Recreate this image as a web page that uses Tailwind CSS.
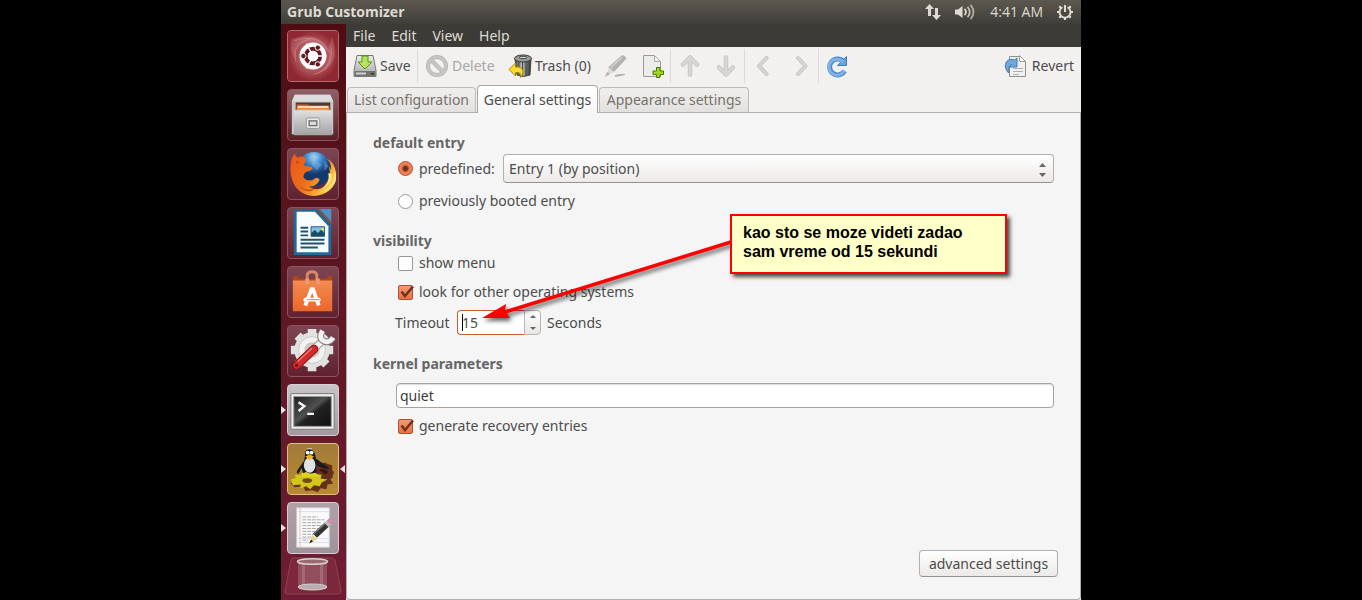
<!DOCTYPE html>
<html lang="en">
<head>
<meta charset="utf-8">
<meta name="viewport" content="width=device-width, initial-scale=1">
<title>Grub Customizer</title>
<script src="https://cdn.jsdelivr.net/npm/@tailwindcss/browser@4"></script>
</head>
<body class="bg-black font-['Noto_Sans','Open_Sans',sans-serif] text-sm text-[#4c4c4c]">
<div class="relative mx-auto flex min-h-screen w-full max-w-[800px] flex-col">

  <!-- Top panel -->
  <header class="flex h-6 items-center bg-linear-to-b from-[#5b594f] to-[#403e39] pr-[7px] pl-1.5 text-[#dfdbd2]">
    <h1 class="font-['Open_Sans','Noto_Sans',sans-serif] text-sm font-bold">Grub Customizer</h1>
    <div class="ml-auto flex items-center">
      <button aria-label="Network" class="mr-3"><svg class="block h-[18px] w-[18px]" viewBox="0 0 18 18" fill="#dfdbd2"><path d="M5.500 1 10 6H7v7H4V6H1zM12.500 17 17 12H14V5h-3v7H8z"/></svg></button>
      <button aria-label="Sound" class="mr-3.5"><svg class="block h-[18px] w-[22px]" viewBox="0 0 22 18" fill="none" stroke="#dfdbd2" stroke-linecap="round"><path fill="#dfdbd2" stroke="none" d="M1 6.500h3L8.500 3v12L4 11.500H1z"/><path stroke-width="1.700" d="M11 6.500q2 2.500 0 5"/><path stroke-width="1.700" opacity=".85" d="M14 4.500q3.500 4.500 0 9"/><path stroke-width="1.700" opacity=".7" d="M17 2.500q5 6.500 0 13"/></svg></button>
      <time class="mr-[13px] font-['Open_Sans','Noto_Sans',sans-serif] text-sm">4:41 AM</time>
      <button aria-label="System"><svg class="block h-[18px] w-[18px]" viewBox="0 0 18 18" fill="none" stroke="#dfdbd2"><path stroke-width="1.800" d="M6.500 4.200a5.500 5.500 0 1 0 5 0"/><path stroke-width="2" d="M9 2v7"/><path stroke-width="2.200" d="M1 9h2.500M14.500 9H17M9 14.500V17M3.300 3.300l1.800 1.800M14.700 3.300l-1.800 1.800M3.300 14.700l1.800-1.800M14.700 14.700l-1.800-1.800"/></svg></button>
    </div>
  </header>

  <div class="flex flex-1">
    <!-- Launcher -->
    <nav aria-label="Launcher" class="flex w-[65px] shrink-0 flex-col gap-[7px] bg-linear-to-b from-[#4e0d12] via-[#5e1723] to-[#6f1d35] pt-1.5 pl-1.5">
      <button aria-label="Dash home" class="size-[52px] overflow-hidden rounded border border-[#b56a70] bg-[#963038]">
        <svg class="size-full" viewBox="0 0 52 52"><defs><radialGradient id="dash"><stop offset="0" stop-color="#d88a8e"/><stop offset=".6" stop-color="#b0545b"/><stop offset="1" stop-color="#8f2831"/></radialGradient></defs><rect width="52" height="52" fill="url(#dash)"/><g fill="#f0c0c2" opacity=".22"><path d="M4 8Q36-2 44 26 36 10 18 12 6 14 8 30 0 18 4 8z"/><path d="M46 6Q56 38 28 45 46 36 42 18z"/></g><g fill="none" stroke="#efc6c8" opacity=".3"><path d="M6 10Q34 2 43 22M8 32Q4 12 24 8M45 18Q46 42 26 45"/></g><circle cx="26" cy="26" r="14" fill="#fff"/><circle cx="26" cy="26" r="7.500" fill="none" stroke="#671922" stroke-width="4"/><g stroke="#fff" stroke-width="1.500"><path d="M26 26 19 13M26 26 19 39M26 26H40"/></g><circle cx="26" cy="26" r="5.400" fill="#fff"/><g fill="#671922" stroke="#fff"><circle cx="16" cy="26" r="2.800"/><circle cx="31" cy="17.300" r="2.800"/><circle cx="31" cy="34.700" r="2.800"/></g></svg>
      </button>
      <button aria-label="Files" class="size-[52px] overflow-hidden rounded border border-[#8d555d] bg-linear-to-b from-[#8e6067] to-[#5a2027]">
        <svg class="size-full" viewBox="0 0 52 52"><defs><linearGradient id="cab" x2="0" y2="1"><stop stop-color="#e0e0e0"/><stop offset="1" stop-color="#a2a2a2"/></linearGradient></defs><path fill="#c9c9c9" d="M7 5h37l3 7v34H4V12z"/><path fill="#dcdcdc" d="M7 5h37l3 7H4z"/><path fill="#4c3a35" d="M8 13h36v9H8z"/><path fill="#e2691b" d="M9 15h12l1 1h21v6H9z"/><path fill="#fff" d="M10 17h32v1.500H10z"/><path fill="#f19a4e" d="M9 19h34v3H9z"/><rect x="6" y="21" width="40" height="26" rx="1" fill="url(#cab)"/><rect x="19" y="29" width="14" height="11" rx="2" fill="#e9e9e9" stroke="#989898"/><path fill="#ddd" stroke="#666" stroke-width="1.300" d="M22 32h8v5h-8z"/></svg>
      </button>
      <button aria-label="Firefox" class="size-[52px] overflow-hidden rounded border border-[#8d555d] bg-linear-to-b from-[#7d4552] to-[#602130]">
        <svg class="size-full" viewBox="0 0 52 52"><defs><radialGradient id="globe" cx=".5" cy=".15"><stop stop-color="#a8dbf5"/><stop offset=".5" stop-color="#3a83c8"/><stop offset="1" stop-color="#15386f"/></radialGradient><linearGradient id="fox" x2="1" y2=".6"><stop stop-color="#e8581c"/><stop offset=".55" stop-color="#ee6e1a"/><stop offset="1" stop-color="#fbd24b"/></linearGradient></defs><circle cx="27" cy="21" r="18" fill="url(#globe)"/><path fill="#8bc4e8" opacity=".4" d="M25 6l7 2-3 5 6 3-5 6-5-5zM38 12l4 6-4 5z"/><path fill="url(#fox)" d="M4 9q2-3 3-4 1 3 3 4 5-3 9 1 0 4-3 7l9 2q2 2-3 4-6 1-6 6 3 5 10 3 4-4 7 0-4 8-12 7 12 7 20-3 5-8 1-19l3 5q0-8-5-12 8 3 10 15 1 16-14 22-14 5-25-4Q-1 31 4 9z"/><path fill="#fde481" d="M48 21q3 17-15 24 18-4 17-17zM42 25q2 10-8 17 12-4 12-16z"/><path fill="#b73514" d="M8 12l5 2-4 1zM8 35q9 10 20 6-8 8-20-6z" opacity=".65"/></svg>
      </button>
      <button aria-label="LibreOffice Writer" class="size-[52px] overflow-hidden rounded border border-[#8d555d] bg-linear-to-b from-[#7d4552] to-[#602130]">
        <svg class="size-full" viewBox="0 0 52 52"><path fill="#1c6b9e" d="M8 2h22l15 16v31H6V4z"/><path fill="#fafdff" d="M9 4h19l14 15v27H9z"/><path fill="#4b93c6" d="M31 1h14v16z"/><path fill="#81482f" opacity=".7" d="M29 1h4l12 13v4z"/><path stroke="#1d536f" stroke-width="2" d="M13 20.500h8M13 24.500h8M13 28.500h8M13 33h25M13 37h25M13 41h18"/><path fill="#82c1e4" stroke="#225a7c" d="M24 19.500h14v10H24z"/><path fill="#184d66" d="M24 29v-3l4-3 3 3 4-4 3 5v2z"/><circle cx="36" cy="22" r="1.500" fill="#f7df54"/></svg>
      </button>
      <button aria-label="Software Center" class="size-[52px] overflow-hidden rounded border border-[#8d555d] bg-linear-to-b from-[#7d4552] to-[#602130]">
        <svg class="size-full" viewBox="0 0 52 52"><defs><linearGradient id="bag" x2="0" y2="1"><stop stop-color="#f48b50"/><stop offset="1" stop-color="#eb672b"/></linearGradient></defs><path fill="#ae461f" d="M5 10l6-1v3h30V9l5 1v6H5z"/><path fill="url(#bag)" d="M5 14h41v32H5z"/><path fill="none" stroke="#db8667" stroke-width="3" d="M20 18V8q1-3 5-3t5 3v10"/><path fill="#e59a7a" d="M18 12h4v6h-4zM29 12h4v6h-4z"/><path fill="none" stroke="#fff" stroke-width="4" d="M18 40l6.500-17h1.500L32 40"/><path stroke="#fff" stroke-width="4" stroke-linecap="round" d="M18 34h14"/><path stroke="#ef7337" d="M20 34h13"/></svg>
      </button>
      <button aria-label="System Settings" class="size-[52px] overflow-hidden rounded border border-[#8d555d] bg-linear-to-b from-[#7d4552] to-[#602130]">
        <svg class="size-full" viewBox="0 0 52 52"><g fill="#e2e2e0" stroke="#e2e2e0"><circle cx="25" cy="25" r="18"/><path stroke-width="9" d="M25 3v44M3 25h44M10 10l30 30M40 10 10 40"/></g><circle cx="25" cy="25" r="14" fill="#f2f2f0" stroke="#c8c8c8"/><circle cx="25" cy="25" r="8" fill="#cdc8c7"/><path stroke="#999" stroke-width="8" d="M23 28 37 14"/><path stroke="#f4f4f4" stroke-width="6" d="M23 28 37 14"/><path fill="none" stroke="#777" stroke-width="7" d="M36 5q-5 8 2 11 5 2 9-4"/><path fill="none" stroke="#f2f2f2" stroke-width="5" d="M36 5q-5 8 2 11 5 2 9-4"/><path stroke="#8b1014" stroke-width="9" stroke-linecap="round" d="M9 41 27 24"/><path stroke="#d22b2b" stroke-width="7" stroke-linecap="round" d="M9 41 27 24"/><path stroke="#ed7770" stroke-width="1.500" d="M10 37 25 23"/><circle cx="9" cy="41" r="1.500" fill="#5e1112"/></svg>
      </button>
      <div class="relative size-[52px]">
        <button aria-label="Terminal" class="block size-full overflow-hidden rounded border border-[#d6cfd2] bg-linear-to-b from-[#c9c4c7] to-[#a39a9f]">
          <svg class="size-full" viewBox="0 0 52 52"><defs><linearGradient id="term" x2="1" y2="1"><stop stop-color="#202020"/><stop offset=".45" stop-color="#505050"/><stop offset=".55" stop-color="#222"/><stop offset="1" stop-color="#111"/></linearGradient></defs><rect x="3" y="9" width="45" height="37" rx="1" fill="#eee" stroke="#777"/><rect x="6" y="12" width="39" height="31" fill="url(#term)" stroke="#999"/><path fill="none" stroke="#f4f4f4" stroke-width="2.500" d="M11 18l6 4-6 5M20 30h7"/></svg>
        </button>
        <svg class="absolute top-[21px] -left-1.5 h-2.5 w-[5px]" viewBox="0 0 5 10" fill="#e7dfe0"><path d="M0 1 5 5 0 9z"/></svg>
      </div>
      <div class="relative size-[52px]">
        <button aria-label="Grub Customizer" class="block size-full overflow-hidden rounded border border-[#dcc27e] bg-linear-to-b from-[#a27b38] to-[#b68b33]">
          <svg class="size-full" viewBox="0 0 52 52"><g fill="#66301e"><path d="M28 22l4-3 3 2 3-2 4 2 4 1v5l2 3-3 5-6 1-11-5z"/><path d="M3 41l5-6 34-5 5 4-3 3 3 4-6 1-1 5-6-1-3 4-6-2-7 1-2-5-9 1z"/></g><path fill="#3b1710" d="M32 27q6-3 10 2l-3 3z"/><path fill="#d4c519" d="M3 37l5-2-1-3 6 0 3-3 6 3 2-5 4 4 7 1-1 4 7 1-6 3-2 4-6-1-4 4-4-3-6 2 0-4-8 1z"/><ellipse cx="20" cy="38" rx="5" ry="2.500" fill="#6b4c16"/><path fill="#1b1b1c" d="M18 8q4-6 9 0 2 4 2 7l14 10q-1 3-14-3l1 9H16l-2-6-3 6q-3-1-1-4l7-10z"/><ellipse cx="22.500" cy="22" rx="6" ry="8" fill="#dfe2e6"/><circle cx="20.500" cy="9" r="2" fill="#fff"/><circle cx="24.500" cy="9" r="2" fill="#fff"/><path fill="#f2b41d" d="M18 13l4.500-2 4.500 2-4.500 4z"/><path fill="#ded225" d="M14 31l5-2 4 2 6-1 3 4H14z"/><path fill="none" stroke="#d8e6ee" d="M20 5h5"/></svg>
        </button>
        <svg class="absolute top-[21px] -left-1.5 h-2.5 w-[5px]" viewBox="0 0 5 10" fill="#e7dfe0"><path d="M0 1 5 5 0 9z"/></svg>
        <svg class="absolute top-[21px] -right-1.5 h-2.5 w-[5px]" viewBox="0 0 5 10" fill="#e7dfe0"><path d="M5 1 0 5 5 9z"/></svg>
      </div>
      <div class="relative size-[52px]">
        <button aria-label="Text Editor" class="block size-full overflow-hidden rounded border border-[#d6cfd2] bg-linear-to-b from-[#aea1a8] to-[#a0939b]">
          <svg class="size-full" viewBox="0 0 52 52"><path fill="#fafafa" stroke="#ccc" d="M9 5h34v41H9z"/><path stroke="#d5dff2" d="M10 9h33M10 37h33M10 41h33"/><path stroke="#efb5b5" d="M12.500 5v41"/><path stroke="#a5a5a5" stroke-dasharray="4 1" d="M15 14.500h16M15 17.500h23M15 20.500h20M15 23.500h23M15 26.500h17M15 29.500h18M15 32.500h12M15 35.500h10M15 38.500h6"/><path stroke="#333" stroke-width="6" d="M28 34 41 22"/><path stroke="#777" stroke-width="1.500" d="M27 32 40 20"/><path stroke="#bbb" stroke-width="6" d="M40 23l3-3"/><path stroke="#d588b0" stroke-width="6" d="M42.500 20.500l3-3"/><path fill="#e3d375" d="M25 33l5 5-7 3z"/><path fill="#222" d="M24 38l2 2-4 2z"/></svg>
        </button>
        <svg class="absolute top-[21px] -left-1.5 h-2.5 w-[5px]" viewBox="0 0 5 10" fill="#e7dfe0"><path d="M0 1 5 5 0 9z"/></svg>
      </div>
      <button aria-label="Trash" class="-mt-1 -ml-1 h-[38px] w-[60px]">
        <svg class="size-full" viewBox="0 0 60 38"><path fill="#8d3545" fill-opacity=".45" stroke="#8a4551" d="M10 1h39q2 0 3 2l6 31q0 3-3 3H4q-2 0-2-3L8 3q0-2 2-2z"/><path fill="#c9aab0" opacity=".3" d="M15 5h29v26q-14 5-29 0z"/><path fill="#fff" opacity=".15" d="M19 6h3v26h-3zM37 6h3v26h-3z"/><ellipse cx="29.500" cy="4.500" rx="15" ry="2.800" fill="#9d6871" stroke="#d9d0d0" stroke-width="1.500"/><ellipse cx="29.500" cy="30" rx="14.500" ry="3" fill="#b9adb0" stroke="#d6cdce"/></svg>
      </button>
    </nav>

    <!-- Application window -->
    <main class="flex min-w-0 flex-1 flex-col bg-[#f2f1f0]">
      <nav aria-label="Menu" class="flex h-[23px] items-center gap-4 bg-[#3c3b37] pl-[7px] text-[#dfdbd2]">
        <button>File</button><button>Edit</button><button>View</button><button>Help</button>
      </nav>

      <div role="toolbar" class="flex h-[38px] items-center whitespace-nowrap">
        <button class="flex h-full w-[71px] items-center gap-[3px] pl-[7px]">
          <svg class="size-6 shrink-0" viewBox="0 0 24 24"><defs><linearGradient id="disk" x2="0" y2="1"><stop stop-color="#ececec"/><stop offset="1" stop-color="#a5a5a5"/></linearGradient></defs><path fill="url(#disk)" stroke="#777" d="M4 1.500h16l3 15v6H1v-6z"/><path fill="#727272" d="M1.500 17h21v5h-21z"/><path fill="#d0d0d0" d="M3 18.500h10v2H3z"/><path fill="#333" d="M18 19h3v1.500h-3z"/><path fill="#b8e35e" stroke="#4f9a06" d="M9 2h6v6h4l-7 7-7-7h4z"/></svg>Save</button>
        <span class="h-[34px] w-px bg-[#dedcda]"></span>
        <button disabled class="flex h-full w-[82px] items-center gap-[3px] pl-[7px] text-[#aaa7a5]">
          <svg class="size-6 shrink-0" viewBox="0 0 24 24" fill="none"><circle cx="12" cy="12" r="9" stroke="#b5b3b2" stroke-width="4"/><path stroke="#b5b3b2" stroke-width="4" d="M6 6l12 12"/><circle cx="12" cy="12" r="9" stroke="#c8c6c5" stroke-width="2.500"/><path stroke="#c8c6c5" stroke-width="2.500" d="M6 6l12 12"/></svg>Delete</button>
        <button class="flex h-full w-[98px] items-center gap-[3px] pl-2">
          <svg class="size-6 shrink-0" viewBox="0 0 24 24"><defs><linearGradient id="can"><stop stop-color="#464846"/><stop offset=".45" stop-color="#c2c4c0"/><stop offset=".7" stop-color="#70726f"/><stop offset="1" stop-color="#333"/></linearGradient></defs><path fill="url(#can)" stroke="#444" d="M7 5h16l-1 16q-7 3-13 0z"/><path stroke="#484a48" d="M11 8v13M14.500 8v14M18 8v13"/><ellipse cx="15" cy="4.500" rx="8.500" ry="3.500" fill="#999b98" stroke="#363836"/><ellipse cx="15" cy="3.500" rx="4" ry="1.200" fill="#d7d8d5" stroke="#4b4c4a"/><path fill="#f9db32" stroke="#ae8500" d="M1 15.500 7.500 9v4h3q4.500 1 4.500 5 0 3-2.500 5.500.5-5-2.500-5H7.500V22z"/></svg>Trash (0)</button>
        <button disabled aria-label="Edit" class="grid h-full w-9 place-items-center"><svg class="size-6" viewBox="0 0 24 24"><path fill="#b3b2b0" d="M17.500 1.500q3-1 5 3L9.500 18.500l-5.500-5z"/><path stroke="#d4d3d1" stroke-width="1.500" d="M7 13.500 18 3"/><path fill="#dcdad7" d="M5 13l5 5-7 3z"/><path fill="#999" d="M3 18l3 2-5 3zM11 21q7-2 10-1v1q-4 1-10 2z" opacity=".7"/></svg></button>
        <button aria-label="New entry" class="grid h-full w-9 place-items-center"><svg class="size-6" viewBox="0 0 24 24"><path fill="#ececeb" stroke="#9b9b99" d="M3.500 1.500h11l6 6v15h-17z"/><path fill="#fafafa" stroke="#aaa" d="M14.500 1.500v6h6z"/><path fill="#a7d818" stroke="#437c05" d="M16.500 13.500h3.500v3.500h3.500v3.500h-3.500v3h-3.500v-3H13v-3.500h3.500z"/></svg></button>
        <span class="h-[34px] w-px bg-[#dedcda]"></span>
        <button disabled aria-label="Move up" class="grid h-full w-[37px] place-items-center"><svg class="size-6" viewBox="0 0 24 24" fill="none" stroke-linecap="round" stroke-linejoin="round"><path stroke="#c8c3c0" stroke-width="4.500" d="M12 20.500V4M5 10.500 12 3.500l7 7"/><path stroke="#dad6d3" stroke-width="2.800" d="M12 20.500V4M5 10.500 12 3.500l7 7"/></svg></button>
        <button disabled aria-label="Move down" class="grid h-full w-9 place-items-center"><svg class="size-6" viewBox="0 0 24 24" fill="none" stroke-linecap="round" stroke-linejoin="round"><path stroke="#c8c3c0" stroke-width="4.500" d="M12 3.500V20M5 13.500l7 7 7-7"/><path stroke="#dad6d3" stroke-width="2.800" d="M12 3.500V20M5 13.500l7 7 7-7"/></svg></button>
        <span class="h-[34px] w-px bg-[#dedcda]"></span>
        <button disabled aria-label="Move left" class="grid h-full w-9 place-items-center"><svg class="size-6" viewBox="0 0 24 24" fill="none" stroke-linecap="round" stroke-linejoin="round"><path stroke="#c8c3c0" stroke-width="4" d="M15.500 4 8 12l7.500 8"/><path stroke="#d8d4d1" stroke-width="2.400" d="M15.500 4 8 12l7.500 8"/></svg></button>
        <button disabled aria-label="Move right" class="grid h-full w-[37px] place-items-center"><svg class="size-6" viewBox="0 0 24 24" fill="none" stroke-linecap="round" stroke-linejoin="round"><path stroke="#c8c3c0" stroke-width="4" d="M10 4l7.500 8-7.500 8"/><path stroke="#d8d4d1" stroke-width="2.400" d="M10 4l7.500 8-7.500 8"/></svg></button>
        <span class="h-[34px] w-px bg-[#dedcda]"></span>
        <button aria-label="Reload" class="grid h-full w-9 place-items-center"><svg class="size-6" viewBox="0 0 24 24" fill="none"><path stroke="#4d8aca" stroke-width="5" d="M19.500 17a8 8 0 1 1-1-9.500"/><path fill="#6aa3dc" stroke="#3d7cbb" d="M21.500 2.500v9h-9l3.200-3.200 3-3z"/><path stroke="#7fb2e5" stroke-width="3" d="M19.300 16.500a8 8 0 1 1-1.300-8.500"/></svg></button>
        <button class="ml-auto flex h-full items-center gap-1 pr-[7px]">
          <svg class="size-6 shrink-0" viewBox="0 0 24 24"><path fill="#f0f0ef" stroke="#90918f" d="M5.500 2.500h11l5 5v15h-16z"/><path fill="#fff" stroke="#999" d="M15.500 1.500v6h6z"/><path stroke="#b0b0ae" d="M9 14.500h10M9 17.500h10M9 20.500h6"/><path fill="#70a6dc" stroke="#3e7bb8" d="M4 18.500C-2 11 3 3 10.500 6L13 4v9H5l2.500-2.500q-3.500 2-2.500 8z"/></svg>Revert</button>
      </div>

      <div role="tablist" class="flex h-7 items-end gap-px border-b border-[#b3b0ac] pl-px whitespace-nowrap text-[#77726d]">
        <button role="tab" class="h-[25px] w-[129px] rounded-t border border-b-0 border-[#bfbcb8] bg-linear-to-b from-[#f0efed] to-[#e3e1df]">List configuration</button>
        <button role="tab" aria-selected="true" class="-mb-px h-7 w-[121px] rounded-t border border-b-0 border-[#aaa7a3] bg-linear-to-b from-white to-[#f5f5f5] text-[#4c4c4c]">General settings</button>
        <button role="tab" class="h-[25px] w-[150px] rounded-t border border-b-0 border-[#bfbcb8] bg-linear-to-b from-[#f0efed] to-[#e3e1df]">Appearance settings</button>
      </div>

      <form class="flex flex-1 flex-col rounded-b border border-t-0 border-[#b3b0ac] bg-[#f5f5f5] px-[26px] pt-5 pb-[22px] leading-5">
        <h2 class="font-bold text-[#666]">default entry</h2>
        <div class="flex h-[31px] items-center pl-[25px]">
          <input id="predefined" type="radio" name="entry" checked class="mr-1.5 size-[15px] shrink-0 appearance-none rounded-full border border-[#a95133] bg-[radial-gradient(circle,#6b3220_0_2px,#f07e51_4px)]">
          <label for="predefined" class="w-[84px] shrink-0">predefined:</label>
          <div class="relative h-[29px] flex-1">
            <select aria-label="Predefined entry" class="size-full appearance-none rounded border border-[#b3b0ac] border-b-[#979490] bg-linear-to-b from-white to-[#eceae8] px-[5px]"><option>Entry 1 (by position)</option></select>
            <svg class="pointer-events-none absolute top-2 right-2 h-[15px] w-[7px]" viewBox="0 0 7 15" fill="#666"><path d="M0 5 3.500 1 7 5zM0 11h7l-3.500 4z"/></svg>
          </div>
        </div>
        <div class="mt-[7px] flex items-center pl-[25px]">
          <input id="previous" type="radio" name="entry" class="mr-1.5 size-[15px] appearance-none rounded-full border border-[#9b9894] bg-white">
          <label for="previous">previously booted entry</label>
        </div>

        <h2 class="mt-5 font-bold text-[#666]">visibility</h2>
        <div class="mt-0.5 flex items-center pl-[25px]">
          <input id="menu" type="checkbox" class="mr-1.5 size-[15px] appearance-none rounded-xs border border-[#9b9894] bg-white">
          <label for="menu">show menu</label>
        </div>
        <div class="mt-[9px] flex items-center pl-[25px]">
          <span class="mr-1.5 grid size-[15px]">
            <input id="others" type="checkbox" checked class="col-start-1 row-start-1 size-[15px] appearance-none rounded-xs border border-[#a95133] bg-linear-to-b from-[#f49a72] to-[#ed6f40]">
            <svg class="pointer-events-none col-start-1 row-start-1 size-[15px] overflow-visible" viewBox="0 0 15 15" fill="none" stroke="#6b3220" stroke-width="2.500"><path d="M3.500 6.500 7 11l8-9.500"/></svg>
          </span>
          <label for="others">look for other operating systems</label>
        </div>
        <div class="mt-2 flex h-[25px] items-center pl-[22px]">
          <label for="timeout" class="w-[62px]">Timeout</label>
          <div class="relative flex h-full">
            <input id="timeout" type="text" inputmode="numeric" value="15" class="h-full w-[67px] rounded-l border border-r-0 border-[#cf5b35] bg-white pl-1 outline-none">
            <span class="absolute top-1 left-[5px] h-[17px] w-px bg-black"></span>
            <div class="flex w-[17px] flex-col rounded-r border border-[#b8b5b2] bg-linear-to-b from-white to-[#e8e6e4]">
              <button type="button" aria-label="Increase" class="grid flex-1 place-items-center"><svg class="h-[3px] w-1.5" viewBox="0 0 6 3" fill="#666"><path d="M0 3 3 0 6 3z"/></svg></button>
              <button type="button" aria-label="Decrease" class="grid flex-1 place-items-center"><svg class="h-[3px] w-1.5" viewBox="0 0 6 3" fill="#666"><path d="M0 0h6L3 3z"/></svg></button>
            </div>
          </div>
          <span class="ml-1.5">Seconds</span>
        </div>

        <h2 class="mt-[19px] font-bold text-[#666]"><label for="kernel">kernel parameters</label></h2>
        <div class="mt-[9px] pl-[23px]">
          <input id="kernel" type="text" value="quiet" class="block h-[25px] w-full rounded border border-[#a6a39f] bg-white px-[3px] text-[#3c3c3c] shadow-[inset_0_1px_1px_#ddd]">
        </div>
        <div class="mt-2 flex items-center pl-[25px]">
          <span class="mr-1.5 grid size-[15px]">
            <input id="recovery" type="checkbox" checked class="col-start-1 row-start-1 size-[15px] appearance-none rounded-xs border border-[#a95133] bg-linear-to-b from-[#f49a72] to-[#ed6f40]">
            <svg class="pointer-events-none col-start-1 row-start-1 size-[15px] overflow-visible" viewBox="0 0 15 15" fill="none" stroke="#6b3220" stroke-width="2.500"><path d="M3.500 6.500 7 11l8-9.500"/></svg>
          </span>
          <label for="recovery">generate recovery entries</label>
        </div>

        <button type="button" class="mt-auto -mr-1 h-[27px] w-[139px] self-end rounded border border-[#b3b0ac] border-b-[#979490] bg-linear-to-b from-white to-[#eceae8]">advanced settings</button>
      </form>
    </main>
  </div>

  <!-- Callout over the form -->
  <svg class="pointer-events-none absolute top-[230px] left-[190px] h-[110px] w-[270px] drop-shadow-[2px_3px_2px_rgba(0,0,0,0.6)]" viewBox="0 0 270 110"><path stroke="#f00" stroke-width="3.500" d="M260 12 34 82"/><path fill="#f00" d="M11 88 35 74l-1 7 5 7z"/></svg>
  <aside class="absolute top-[214px] left-[449px] h-[60px] w-[277px] border-2 border-[#f00] bg-[#ffffc8] px-[11px] py-[7px] font-['Liberation_Sans',sans-serif] text-base leading-[19px] font-bold text-black shadow-[3px_3px_4px_rgba(0,0,0,0.7)]">kao sto se moze videti zadao sam vreme od 15 sekundi</aside>
</div>
</body>
</html>
